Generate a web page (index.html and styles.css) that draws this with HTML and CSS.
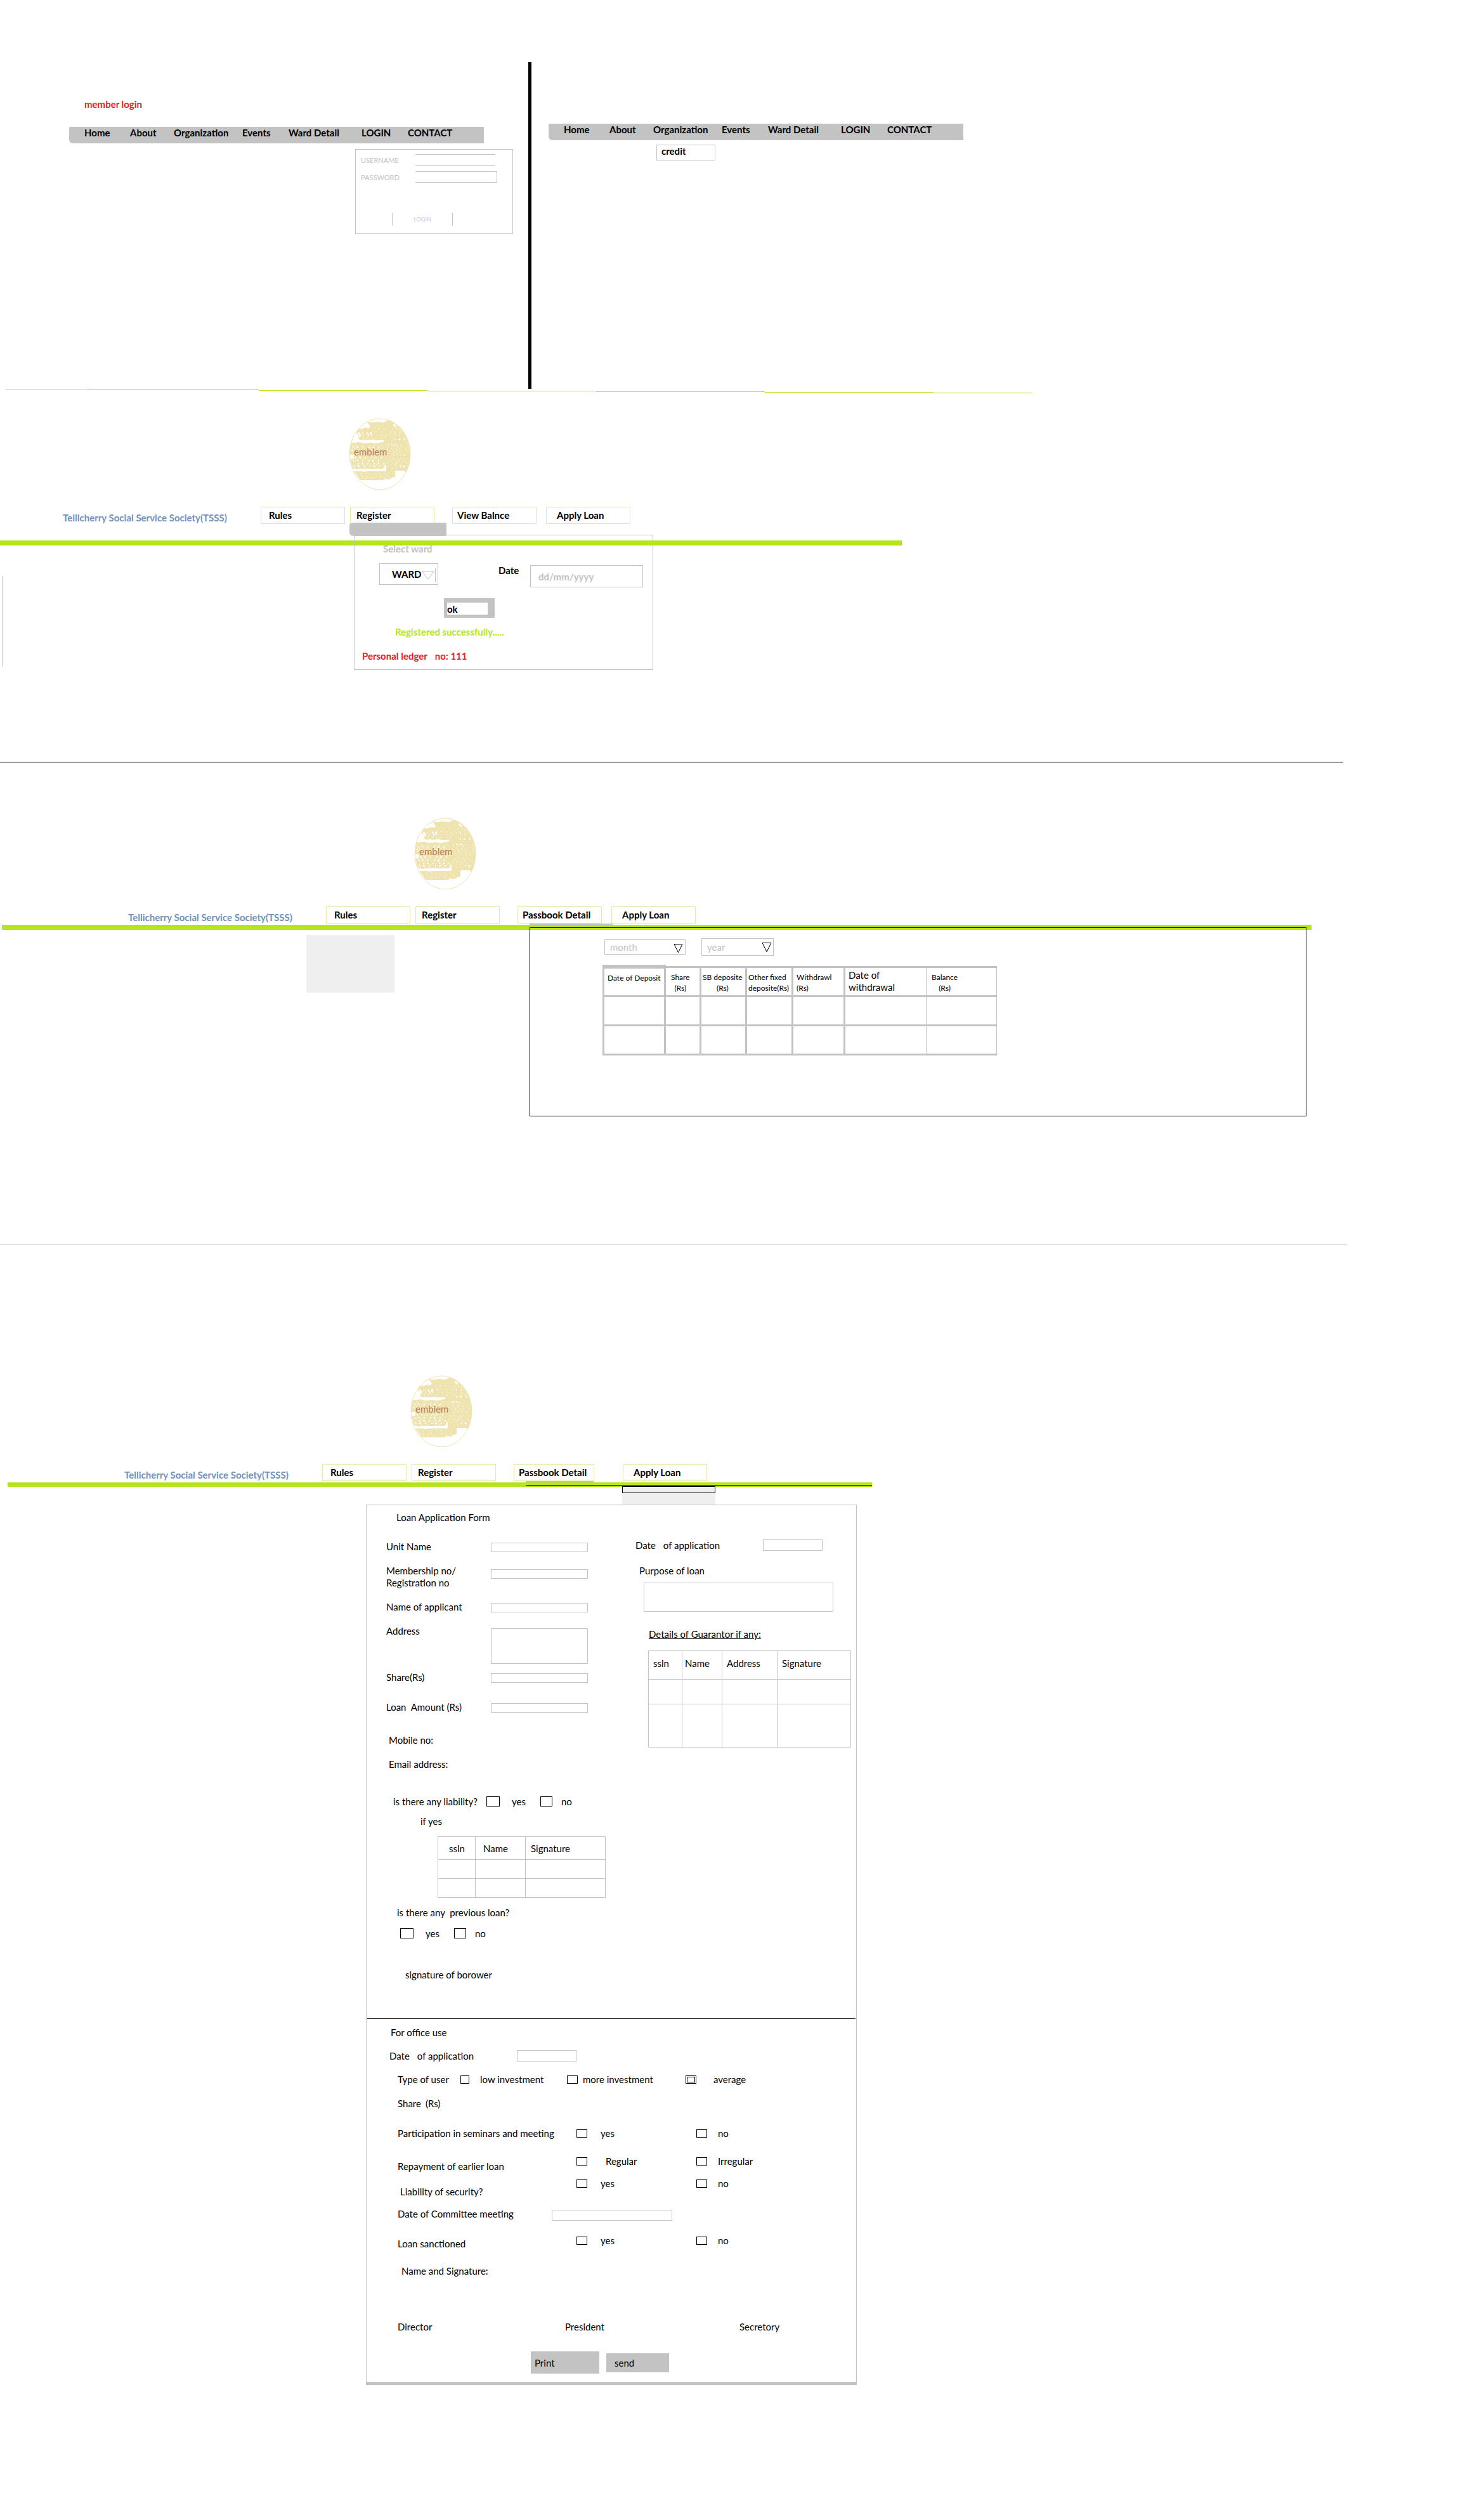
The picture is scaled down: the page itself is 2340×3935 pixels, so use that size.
FILE: index.html
```html
<!DOCTYPE html>
<html lang="en">
<head>
<meta charset="utf-8">
<meta name="viewport" content="width=device-width, initial-scale=1">
<title>Tellicherry Social Service Society (TSSS)</title>
<link rel="stylesheet" href="styles.css">
</head>
<body>

<svg class="defs" aria-hidden="true">
  <defs>
    <clipPath id="oval"><ellipse cx="49" cy="57" rx="48" ry="56"/></clipPath>
    <symbol id="emblem" viewBox="0 0 98 113">
      <g clip-path="url(#oval)">
        <path fill="#efe4b0" d="M64 3l6 4 6-1 10 10 12 20v47l-9 2-1-2H73v10l-5 1-4 3-6-1-4 2H18L8 84h12l4 1 6-1h29V75l-3-1v5l-4 1H20l-8 1-6-2-4-14 6-1v-6H0V39h10l6-1 8 2 10-1 8 1 12-2 2-3H44l-6-1-8 1-6-1-4 1-5-2 2-4-5-5 2-7h8l3-2 7 1 2-3-5-7 8 1 8-1 10 1 6-3z"/>
        <g fill="none" stroke="#fff">
          <path stroke-dasharray="3 4 1 6 2 3" d="M14 24h26M16 27h20M70 11h16M72 13h18" stroke-width="3"/>
          <path stroke-dasharray="1 5 2 7 1 3 1 9" d="M40 17h56M36 22h60M44 27h50M22 31h70M4 43h90M2 48h94M6 53h90M52 59h44M4 64h92M2 69h94M8 74h88M10 79h84M12 88h58M14 92h56M20 95h48"/>
          <path stroke-dasharray="2 4 3 6 2 8" d="M6 46h50M4 51h48M10 62h46M6 67h50M14 72h44M8 76h44M72 34h22M66 42h12M80 76h16" stroke-width="2"/>
          <path stroke-dasharray="1 8 1 4 2 6" d="M62 45h34M60 50h36M64 66h30M60 71h34M66 19h28M58 24h36M60 56h34"/>
        </g>
      </g>
      <ellipse cx="49" cy="57" rx="48" ry="56" fill="none" stroke="#efe4b0"/>
    </symbol>
  </defs>
</svg>

<section class="boards">
  <div class="board board--login">
    <h1 class="note">member login</h1>
    <nav class="menu">
      <a href="#">Home</a><a href="#">About</a><a href="#">Organization</a><a href="#">Events</a><a href="#">Ward Detail</a><a href="#">LOGIN</a><a href="#">CONTACT</a>
    </nav>
    <form class="login">
      <label for="user">USERNAME</label>
      <input id="user" class="login-user" type="text">
      <label for="pass">PASSWORD</label>
      <input id="pass" class="login-pass" type="password">
      <button type="button">LOGIN</button>
    </form>
  </div>
  <div class="board board--credit">
    <nav class="menu">
      <a href="#">Home</a><a href="#">About</a><a href="#">Organization</a><a href="#">Events</a><a href="#">Ward Detail</a><a href="#">LOGIN</a><a href="#">CONTACT</a>
    </nav>
    <a class="submenu" href="#">credit</a>
  </div>
</section>

<svg class="slope" viewBox="0 0 1620 7" preserveAspectRatio="none" shape-rendering="crispEdges" aria-hidden="true">
  <path fill="#b5e61d" d="M0 0h134v1H0zM134 1h266v1H134zM400 2h266v1H400zM666 3h266v1H666zM932 4h266v1H932zM1198 5h266v1h-266zM1464 6h156v1h-156z"/>
</svg>

<section class="screen screen--register">
  <svg class="emblem" viewBox="0 0 98 113"><use href="#emblem"/><text x="8" y="59">emblem</text></svg>
  <header class="head">
    <span class="brand">Tellicherry Social Service Society(TSSS)</span>
    <nav class="tabs">
      <a href="#">Rules</a><a href="#">Register<i class="tab-drop"></i></a><a href="#">View Balnce</a><a href="#">Apply Loan</a>
    </nav>
  </header>
  <div class="bar"></div>
  <div class="register-body">
    <div class="rail"></div>
    <form class="register">
      <label class="register-title" for="ward">Select ward</label>
      <div class="register-row">
        <span class="pick pick--ward">
          <select id="ward"><option>WARD</option></select>
          <svg viewBox="0 0 24 22" aria-hidden="true"><path d="M1.500 4.500h19l-9.500 13zM22.500 0v22"/></svg>
        </span>
        <label class="register-date" for="date">Date</label>
        <input id="date" type="text" placeholder="dd/mm/yyyy">
      </div>
      <button type="button">ok</button>
      <p class="ok-note">Registered successfully.....</p>
      <p class="ledger"><span>Personal ledger</span><span>no: 111</span></p>
    </form>
  </div>
</section>

<hr class="rule">

<section class="screen screen--passbook">
  <svg class="emblem" viewBox="0 0 98 113"><use href="#emblem"/><text x="8" y="59">emblem</text></svg>
  <header class="head">
    <span class="brand">Tellicherry Social Service Society(TSSS)</span>
    <nav class="tabs">
      <a href="#">Rules</a><a href="#">Register</a><a href="#">Passbook Detail<i class="tab-line"></i></a><a href="#">Apply Loan</a>
    </nav>
  </header>
  <div class="bar"></div>
  <div class="passbook-body">
    <div class="photo"></div>
    <div class="passbook">
      <div class="period">
        <span class="pick pick--month">
          <select aria-label="month"><option>month</option></select>
          <svg viewBox="0 0 16 16" aria-hidden="true"><path d="M1 1.500h13l-6.500 13z"/></svg>
        </span>
        <span class="pick pick--year">
          <select aria-label="year"><option>year</option></select>
          <svg viewBox="0 0 16 16" aria-hidden="true"><path d="M1 1.500h14l-7 14z"/></svg>
        </span>
      </div>
      <table class="ledger-table">
        <colgroup><col class="w1"><col class="w2"><col class="w3"><col class="w4"><col class="w5"><col class="w6"><col class="w7"></colgroup>
        <thead>
          <tr>
            <th class="first">Date of Deposit</th>
            <th class="roomy"><span>Share<br>(Rs)</span></th>
            <th class="tight"><span>SB deposite<br>(Rs)</span></th>
            <th class="tight">Other fixed<br>deposite(Rs)</th>
            <th>Withdrawl<br>(Rs)</th>
            <th class="large">Date of<br>withdrawal</th>
            <th class="roomy"><span>Balance<br>(Rs)</span></th>
          </tr>
        </thead>
        <tbody>
          <tr><td></td><td></td><td></td><td></td><td></td><td></td><td></td></tr>
          <tr><td></td><td></td><td></td><td></td><td></td><td></td><td></td></tr>
        </tbody>
      </table>
    </div>
  </div>
</section>

<hr class="rule rule--pale">

<section class="screen screen--loan">
  <svg class="emblem" viewBox="0 0 98 113"><use href="#emblem"/><text x="8" y="59">emblem</text></svg>
  <header class="head">
    <span class="brand">Tellicherry Social Service Society(TSSS)</span>
    <nav class="tabs">
      <a href="#">Rules</a><a href="#">Register</a><a href="#">Passbook Detail<i class="tab-line"></i></a><a href="#">Apply Loan<i class="tab-menu"></i></a>
    </nav>
  </header>
  <div class="bar"></div>

  <form class="loan">
    <h2>Loan Application Form</h2>
    <div class="columns">
      <div class="borrower">
        <div class="fields">
          <label for="unit">Unit Name</label><input id="unit" type="text">
          <label for="member">Membership no/<br>Registration no</label><input id="member" class="lower" type="text">
          <label for="name">Name of applicant</label><input id="name" type="text">
          <label for="address">Address</label><textarea id="address"></textarea>
          <label for="share">Share(Rs)</label><input id="share" type="text">
          <label for="amount">Loan&nbsp; Amount (Rs)</label><input id="amount" type="text">
          <span class="plain">Mobile no:</span>
          <span class="plain">Email address:</span>
        </div>
        <fieldset class="choice choice--liability">
          <legend>is there any liability?</legend>
          <label><input type="checkbox">yes</label>
          <label><input type="checkbox">no</label>
        </fieldset>
        <p class="if-yes">if yes</p>
        <table class="grid grid--liability">
          <colgroup><col class="l1"><col class="l2"><col class="l3"></colgroup>
          <thead><tr><th>ssln</th><th>Name</th><th>Signature</th></tr></thead>
          <tbody><tr><td></td><td></td><td></td></tr><tr><td></td><td></td><td></td></tr></tbody>
        </table>
        <fieldset class="choice choice--previous">
          <legend>is there any&nbsp; previous loan?</legend>
          <label><input type="checkbox">yes</label>
          <label><input type="checkbox">no</label>
        </fieldset>
        <p class="signature">signature of borower</p>
      </div>

      <div class="guarantor">
        <div class="dated">
          <label for="applied"><span>Date</span><span>of application</span></label>
          <input id="applied" type="text">
        </div>
        <div class="purpose">
          <label for="purpose">Purpose of loan</label>
          <textarea id="purpose"></textarea>
        </div>
        <h3>Details of Guarantor if any:</h3>
        <table class="grid grid--guarantor">
          <colgroup><col class="g1"><col class="g2"><col class="g3"><col class="g4"></colgroup>
          <thead><tr><th>ssln</th><th>Name</th><th>Address</th><th>Signature</th></tr></thead>
          <tbody><tr><td></td><td></td><td></td><td></td></tr><tr><td></td><td></td><td></td><td></td></tr></tbody>
        </table>
      </div>
    </div>

    <div class="office">
      <h2>For office use</h2>
      <div class="dated">
        <label for="received"><span>Date</span><span>of application</span></label>
        <input id="received" type="text">
      </div>
      <fieldset class="kinds">
        <legend>Type of user</legend>
        <label><input type="checkbox">low investment</label>
        <label><input type="checkbox">more investment</label>
        <label><input class="double" type="checkbox">average</label>
      </fieldset>
      <p class="office-share"><span>Share</span><span>(Rs)</span></p>
      <fieldset class="question">
        <legend>Participation in seminars and meeting</legend>
        <label><input type="checkbox">yes</label>
        <label><input type="checkbox">no</label>
      </fieldset>
      <fieldset class="question question--repayment">
        <legend>Repayment of earlier loan</legend>
        <label><input type="checkbox">Regular</label>
        <label><input type="checkbox">Irregular</label>
      </fieldset>
      <fieldset class="question question--security">
        <legend>Liability of security?</legend>
        <label><input type="checkbox">yes</label>
        <label><input type="checkbox">no</label>
      </fieldset>
      <div class="committee">
        <label for="committee">Date of Committee meeting</label>
        <input id="committee" type="text">
      </div>
      <fieldset class="question question--sanction">
        <legend>Loan sanctioned</legend>
        <label><input type="checkbox">yes</label>
        <label><input type="checkbox">no</label>
      </fieldset>
      <p class="names">Name and Signature:</p>
      <div class="signers"><span>Director</span><span>President</span><span>Secretory</span></div>
      <div class="actions">
        <button class="print" type="button">Print</button>
        <button class="send" type="button">send</button>
      </div>
    </div>
  </form>
</section>

</body>
</html>
```
FILE: styles.css
```css
:root {
  --grey: #c3c3c3;
  --green: #b5e61d;
  --sand: #efe4b0;
  --red: #ed1c24;
}

* { box-sizing: border-box; }

body {
  margin: 0;
  background: #fff;
  color: #000;
  font: 15px/20px Lato, "Liberation Sans", sans-serif;
}

h1, h2, h3, p, fieldset, legend { margin: 0; padding: 0; border: 0; font: inherit; }
a { color: inherit; text-decoration: none; }
button, input, select, textarea {
  margin: 0;
  padding: 0;
  border: 1px solid var(--grey);
  border-radius: 0;
  background: transparent;
  color: inherit;
  font: inherit;
  appearance: none;
}
textarea { display: block; resize: none; }
table { border-collapse: collapse; table-layout: fixed; }
th { font-weight: 400; text-align: left; vertical-align: top; }
td { padding: 0; }
input[type="checkbox"] { flex: none; border-color: #000; }

.defs { position: absolute; width: 0; height: 0; }

/* Login and credit boards */
.boards { display: flex; padding-top: 98px; font-weight: 700; }
.board--login {
  flex: 0 0 838px;
  min-height: 515px;
  padding: 56px 0 0 109px;
  border-right: 5px solid #000;
}
.board--credit { flex: 1; padding: 97px 0 0 27px; }
.note { padding-left: 24px; color: var(--red); font-weight: 700; }
.menu {
  display: grid;
  grid-template-columns: 72px 69px 108px 73px 115px 73px auto;
  max-width: 654px;
  height: 26px;
  padding-left: 24px;
  border-radius: 2px 0 0 6px;
  background: var(--grey);
  line-height: 18px;
}
.board--login .menu { margin-top: 26px; }
.login {
  display: grid;
  grid-template-columns: 86px auto;
  row-gap: 9px;
  justify-items: start;
  width: 249px;
  height: 134px;
  margin: 9px 0 0 451px;
  padding: 7px 0 0 8px;
  border: 1px solid var(--grey);
  align-content: start;
  color: var(--grey);
  font-size: 11px;
  font-weight: 400;
  line-height: 20px;
}
.login input { height: 18px; border-left: 0; }
.login label { height: 18px; }
.login-user { width: 126px; border-right: 0; }
.login-pass { width: 129px; }
.login button {
  grid-column: 1 / 3;
  width: 96px;
  height: 21px;
  margin: 38px 0 0 49px;
  border-width: 0 1px;
  color: #c8bfe7;
  font-size: 9px;
  line-height: 18px;
}
.submenu {
  display: block;
  width: 93px;
  height: 25px;
  margin: 7px 0 0 170px;
  padding-left: 7px;
  border: 1px solid var(--grey);
  line-height: 18px;
}
.slope { display: block; width: 1620px; max-width: 100%; height: 7px; margin-left: 8px; }

/* Shared screen header */
.emblem { display: block; width: 98px; height: 113px; }
.emblem text { fill: #b97a57; }
.head { display: flex; margin-top: 27px; font-weight: 700; }
.brand { flex: 0 0 312px; padding-top: 7px; color: #7092be; }
.tabs { display: flex; }
.tabs a {
  position: relative;
  width: 133px;
  height: 27px;
  padding-left: 12px;
  border: 1px solid var(--sand);
  line-height: 24px;
}
.tabs a:nth-child(2) { margin-left: 8px; padding-left: 9px; }
.tabs a:nth-child(3) { margin-left: 28px; padding-left: 7px; }
.tabs a:nth-child(4) { margin-left: 15px; padding-left: 16px; }
.tab-drop {
  position: absolute;
  top: 24px;
  left: -2px;
  width: 153px;
  height: 21px;
  border-radius: 5px 2px 2px 6px;
  background: var(--grey);
}
.tab-line { position: absolute; top: 26px; left: 18px; width: 131px; height: 2px; background: var(--grey); }
.tab-menu {
  position: absolute;
  top: 34px;
  left: -2px;
  width: 147px;
  height: 30px;
  background: #efefef;
}
.tab-menu::before { content: ""; display: block; height: 9px; border: 1px solid #000; }
.bar { height: 8px; background: var(--green); }
.rule { max-width: 2118px; height: 1px; margin: 0; border: 0; background: #000; }
.rule--pale { max-width: 2124px; background: var(--grey); }

/* Register screen */
.screen--register { padding: 39px 0 145px; }
.screen--register .emblem { margin-left: 550px; }
.screen--register .head { padding-left: 99px; }
.screen--register .bar { max-width: 1422px; margin-top: 26px; }
.register-body { display: flex; margin-top: -17px; padding-left: 3px; }
.rail { flex: 0 0 555px; height: 143px; margin-top: 65px; border-left: 1px solid var(--grey); }
.register {
  position: relative;
  width: 472px;
  padding: 11px 0 11px 12px;
  border: 1px solid var(--grey);
  font-weight: 700;
}
.register-title { display: block; margin-left: 33px; color: var(--grey); }
.register-row { display: flex; align-items: flex-start; margin: 13px 0 0 27px; }
.register-date { width: 50px; margin-left: 95px; line-height: 22px; }
.register-row input { width: 178px; height: 35px; margin-top: 3px; padding: 0 12px 0; }
.register-row input::placeholder { color: var(--grey); opacity: 1; }
.register button {
  display: block;
  width: 80px;
  height: 31px;
  margin: 17px 0 0 129px;
  border-width: 7px 11px 5px 5px;
  text-align: left;
  line-height: 18px;
}
.ok-note { margin: 12px 0 0 52px; color: var(--green); }
.ledger { display: flex; gap: 12px; margin-top: 18px; color: var(--red); }

.pick { position: relative; display: block; }
.pick select { display: block; width: 100%; height: 100%; }
.pick svg { position: absolute; fill: none; pointer-events: none; }
.pick--ward { width: 93px; height: 34px; }
.pick--ward select { padding-left: 19px; }
.pick--ward svg { top: 8px; right: 3px; width: 24px; height: 22px; stroke: var(--grey); }
.pick--month { width: 128px; height: 24px; }
.pick--year { width: 114px; height: 28px; }
.pick--month select, .pick--year select { padding-left: 8px; color: var(--grey); }
.pick--month svg, .pick--year svg { top: 6px; right: 3px; width: 16px; height: 16px; stroke: #000; }

/* Passbook screen */
.screen--passbook { padding: 87px 0 202px; }
.screen--passbook .emblem { margin-left: 653px; }
.screen--passbook .head { padding-left: 202px; }
.screen--passbook .bar { max-width: 2065px; margin: 2px 0 0 3px; }
.passbook-body { display: flex; align-items: flex-start; margin-top: -4px; padding-left: 483px; }
.photo { flex: 0 0 139px; height: 91px; margin: 12px 213px 0 0; background: #efefef; }
.passbook {
  position: relative;
  flex: 0 1 1225px;
  min-height: 298px;
  padding: 16px 0 0 114px;
  border: 1px solid #000;
}
.period { display: flex; align-items: center; gap: 25px; padding-left: 3px; }
.ledger-table { width: 621px; margin-top: 14px; }
.w1 { width: 97px; } .w2 { width: 56px; } .w3 { width: 72px; } .w4 { width: 73px; }
.w5 { width: 82px; } .w6 { width: 129px; } .w7 { width: 111px; }
.ledger-table th, .ledger-table td { height: 46px; border: 3px solid var(--grey); }
.ledger-table th { padding: 6px 0 0 5px; font-size: 12px; line-height: 17px; white-space: nowrap; }
.ledger-table th:last-child, .ledger-table td:last-child { border-left-width: 1px; border-right-width: 1px; }
.ledger-table th:nth-child(6), .ledger-table td:nth-child(6) { border-right-width: 1px; }
.ledger-table th.first { border-top-width: 6px; }
.ledger-table th.tight { padding-left: 2px; }
.ledger-table th.roomy { padding-left: 8px; }
.ledger-table th.large { padding-top: 2px; font-size: 15px; line-height: 19px; }
.ledger-table th span { display: inline-block; text-align: center; }

/* Loan screen */
.screen--loan { padding: 205px 0 175px; }
.screen--loan .emblem { margin-left: 647px; }
.screen--loan .head { padding-left: 196px; }
.screen--loan .tabs a:nth-child(3) { width: 127px; }
.screen--loan .tabs a:nth-child(4) { margin-left: 45px; }
.screen--loan .tab-line { width: 107px; }
.screen--loan .bar { max-width: 1363px; height: 7px; margin: 2px 0 0 12px; padding: 4px 0 0 817px; }
.screen--loan .bar::before { content: ""; display: block; height: 1px; background: #000; }

.loan {
  position: relative;
  width: 774px;
  margin: 28px 0 0 577px;
  padding-top: 9px;
  border: 1px solid var(--grey);
  border-bottom-width: 5px;
}
.loan h2 { padding-left: 47px; }
.columns { display: flex; }
.borrower { flex: 0 0 424px; padding: 27px 0 59px 31px; }
.fields {
  display: grid;
  grid-template-columns: 165px 153px;
  grid-template-rows: 38px 57px 38px 73px 47px 51px 38px 20px;
  align-items: start;
}
.fields label { line-height: 19px; }
.fields input { height: 15px; margin-top: 3px; }
.fields .lower { margin-top: 7px; }
.fields textarea { height: 56px; margin-top: 5px; }
.fields .plain { grid-column: 1 / 3; padding-left: 4px; }

.choice label { float: left; display: flex; align-items: center; height: 24px; }
.choice input { width: 21px; height: 16px; margin-right: 19px; }
.choice label + label { margin-left: 23px; }
.choice label + label input { width: 19px; margin-right: 14px; }
.choice--liability { height: 24px; margin: 37px 0 0 11px; }
.choice--liability legend { float: left; width: 147px; line-height: 24px; }
.choice--previous { margin: 13px 0 0 17px; }
.choice--previous legend { float: left; width: 100%; margin-bottom: 11px; }
.choice--previous label:first-of-type { clear: left; margin-left: 5px; }
.choice::after { content: ""; display: block; clear: both; }
.if-yes { margin: 9px 0 0 54px; }
.signature { margin: 43px 0 0 30px; }

.grid th, .grid td { border: 1px solid var(--grey); }
.grid--liability { width: 265px; margin: 14px 0 0 81px; }
.l1 { width: 59px; } .l2 { width: 79px; } .l3 { width: 126px; }
.grid--liability th { height: 36px; padding: 8px 0 0 12px; }
.grid--liability th:first-child { padding-left: 17px; }
.grid--liability th:last-child { padding-left: 8px; }
.grid--liability td { height: 30px; }
.grid--guarantor { width: 320px; margin: 16px 0 0 20px; }
.g1 { width: 53px; } .g2 { width: 63px; } .g3 { width: 87px; } .g4 { width: 116px; }
.grid--guarantor th { height: 45px; padding: 9px 0 0 7px; }
.grid--guarantor th:nth-child(2) { padding-left: 4px; }
.grid--guarantor td { height: 39px; }
.grid--guarantor tr:last-child td { height: 68px; }

.guarantor { flex: 1; padding-top: 23px; }
.dated { display: flex; align-items: center; height: 22px; }
.dated label { display: flex; gap: 12px; width: 201px; }
.dated input { width: 94px; height: 18px; }
.purpose { padding: 19px 0 0 6px; }
.purpose label { display: block; }
.purpose textarea { width: 299px; height: 46px; margin: 9px 0 0 7px; }
.guarantor h3 { margin: 25px 0 0 21px; text-decoration: underline; }

/* Office part of the loan form */
.office { margin: 0 1px; padding: 11px 0 13px 48px; border-top: 1px solid #000; }
.loan .office h2 { padding-left: 0; margin-left: -11px; }
.office .dated { margin: 16px 0 0 -13px; }
.kinds { display: flex; margin-top: 16px; }
.kinds legend { float: left; width: 99px; }
.kinds label { float: left; display: flex; align-items: center; height: 20px; }
.kinds input { width: 14px; height: 13px; margin-right: 17px; }
.kinds label:nth-of-type(1) { width: 168px; }
.kinds label:nth-of-type(2) { width: 187px; }
.kinds label:nth-of-type(2) input { width: 17px; margin-right: 8px; }
.kinds .double { width: 17px; margin-right: 27px; border: 3px double #000; }
.office-share { display: flex; gap: 7px; margin-top: 18px; }
.question { height: 20px; margin-top: 27px; }
.question legend { float: left; width: 282px; }
.question label { float: left; display: flex; align-items: center; width: 189px; height: 20px; }
.question label:last-child { width: auto; }
.question input { width: 17px; height: 13px; margin-right: 21px; }
.question label:last-child input { margin-right: 17px; }
.question--repayment { height: 28px; margin-top: 24px; }
.question--repayment legend { padding-top: 8px; }
.question--repayment label:first-of-type input { margin-right: 29px; }
.question--security { height: 33px; margin-top: 7px; }
.question--security legend { padding: 13px 0 0 4px; }
.question--sanction { height: 25px; margin-top: 21px; }
.question--sanction legend { padding-top: 5px; }
.committee { display: flex; margin-top: 15px; }
.committee label { width: 243px; }
.committee input { width: 190px; height: 16px; margin-top: 5px; }
.names { margin: 23px 0 0 6px; }
.signers { display: grid; grid-template-columns: 264px 275px auto; margin-top: 68px; }
.actions { display: flex; align-items: center; gap: 11px; margin: 29px 0 0 210px; }
.actions button { border: 0; background: var(--grey); text-align: left; }
.print { width: 108px; height: 35px; }
.send { width: 99px; height: 30px; }
.actions .print { padding-left: 6px; }
.actions .send { padding-left: 13px; }
```
